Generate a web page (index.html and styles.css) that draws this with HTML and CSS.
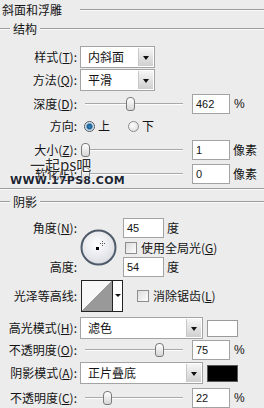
FILE: index.html
```html
<!DOCTYPE html>
<html lang="zh-CN">
<head>
    <meta charset="UTF-8">
    <meta name="viewport" content="width=device-width, initial-scale=1.0">
    <title>斜面和浮雕</title>
    <link rel="stylesheet" href="styles.css">
</head>
<body>
    <div class="panel">
        <!-- Bevel and Emboss -->
        <div class="title"><span>斜面和浮雕</span><i class="rule"></i></div>
        <div class="group-head"><i class="rule short"></i><span>结构</span><i class="rule"></i></div>

        <div class="row r-style">
            <div class="lbl">样式(<u>T</u>):</div>
            <div class="select narrow"><span>内斜面</span><b class="drop"></b></div>
        </div>
        <div class="row r-method">
            <div class="lbl">方法(<u>Q</u>):</div>
            <div class="select narrow"><span>平滑</span><b class="drop"></b></div>
        </div>
        <div class="row r-depth">
            <div class="lbl">深度(<u>D</u>):</div>
            <div class="slider"><b class="thumb" style="left: 46.2%"></b></div>
            <div class="field">462</div>
            <span class="unit pct">%</span>
        </div>
        <div class="row r-dir">
            <div class="lbl">方向:</div>
            <span class="radio on"></span><span class="opt">上</span>
            <span class="radio off"></span><span class="opt">下</span>
        </div>
        <div class="row r-size">
            <div class="lbl">大小(<u>Z</u>):</div>
            <div class="slider"><b class="thumb" style="left: 0.4%"></b></div>
            <div class="field">1</div>
            <span class="unit">像素</span>
        </div>
        <div class="row r-soft">
            <div class="lbl">软化(<u>F</u>):</div>
            <div class="slider"><b class="thumb" style="left: 0%"></b></div>
            <div class="field">0</div>
            <span class="unit">像素</span>
        </div>

        <div class="divider"></div>

        <!-- Shading -->
        <div class="group-head g-shade"><i class="rule short"></i><span>阴影</span><i class="rule"></i></div>

        <div class="angle">
            <div class="lbl a-l1">角度(<u>N</u>):</div>
            <div class="dial">
                <svg width="37" height="37" viewBox="0 0 37 37">
                    <defs>
                        <radialGradient id="dialFill" cx="45%" cy="40%" r="60%">
                            <stop offset="0" stop-color="#ffffff"/>
                            <stop offset="1" stop-color="#dcdde3"/>
                        </radialGradient>
                    </defs>
                    <circle cx="18.5" cy="18.5" r="17" fill="url(#dialFill)" stroke="#4f5b6a" stroke-width="2"/>
                    <rect x="16" y="18" width="3" height="3" fill="#000"/>
                    <path d="M22.5 12v5M20 14.5h5" stroke="#555" stroke-width="1" stroke-dasharray="1 1"/>
                </svg>
            </div>
            <div class="a-f1"><div class="field wide">45</div><span class="unit">度</span></div>
            <div class="a-c"><span class="check"></span><span class="check-text">使用全局光(<u>G</u>)</span></div>
            <div class="lbl a-l3">高度:</div>
            <div class="a-f3"><div class="field wide">54</div><span class="unit">度</span></div>
        </div>

        <div class="row r-contour">
            <div class="lbl">光泽等高线:</div>
            <div class="contour"><div class="curve"></div><b class="drop-s"></b></div>
            <span class="check c-aa"></span><span class="check-text">消除锯齿(<u>L</u>)</span>
        </div>
        <div class="row r-hl">
            <div class="lbl">高光模式(<u>H</u>):</div>
            <div class="select broad"><span>滤色</span><b class="drop"></b></div>
            <div class="swatch white"></div>
        </div>
        <div class="row r-op1">
            <div class="lbl">不透明度(<u>O</u>):</div>
            <div class="slider"><b class="thumb" style="left: 75%"></b></div>
            <div class="field">75</div>
            <span class="unit pct">%</span>
        </div>
        <div class="row r-sh">
            <div class="lbl">阴影模式(<u>A</u>):</div>
            <div class="select broad"><span>正片叠底</span><b class="drop"></b></div>
            <div class="swatch black"></div>
        </div>
        <div class="row r-op2">
            <div class="lbl">不透明度(<u>C</u>):</div>
            <div class="slider"><b class="thumb" style="left: 22%"></b></div>
            <div class="field">22</div>
            <span class="unit pct">%</span>
        </div>

        <!-- Watermark over the soften row -->
        <div class="watermark">
            <div class="wm-cn">一起ps吧</div>
            <div class="wm-url">WWW.17PS8.COM</div>
        </div>
    </div>
</body>
</html>
```

FILE: styles.css
```css
/* General */
body {
    margin: 0;
    background: #ececec;
    font-family: "Noto Sans CJK SC", "Noto Sans", sans-serif;
    font-size: 12px;
    line-height: 16px;
    color: #141414;
}

.panel {
    position: relative;
    width: 264px;
    height: 408px;
    overflow: hidden;
}

u {
    text-decoration: underline;
    text-underline-offset: 1px;
}

/* Headings and rules */
.title {
    display: flex;
    align-items: center;
    height: 20px;
    padding-left: 2px;
}

.rule {
    flex: 1;
    height: 0;
    border-top: 1px solid #9c9c9c;
    border-bottom: 1px solid #fafafa;
}

.title .rule {
    margin-left: 18px;
}

.group-head {
    display: flex;
    align-items: center;
    height: 18px;
}

.group-head span {
    margin: 0 3px;
}

.rule.short {
    flex: none;
    width: 10px;
}

.divider {
    margin-top: 4px;
    border-top: 1px solid #9c9c9c;
    border-bottom: 1px solid #fafafa;
}

.g-shade {
    margin-top: 3px;
}

/* Rows */
.row {
    display: flex;
    align-items: center;
}

.lbl {
    width: 77px;
    flex: none;
    text-align: right;
    white-space: nowrap;
}

.r-style { margin-top: 8px; height: 22px; }
.r-method { margin-top: 1px; height: 22px; }
.r-depth { margin-top: 3px; height: 20px; }
.r-dir { margin-top: 3px; height: 18px; }
.r-size { margin-top: 5px; height: 20px; }
.r-soft { margin-top: 4px; height: 20px; }
.r-contour { margin-top: 3px; height: 32px; }
.r-hl { margin-top: 5px; height: 22px; }
.r-op1 { margin-top: 1px; height: 20px; }
.r-sh { margin-top: 2px; height: 22px; }
.r-op2 { margin-top: 4px; height: 20px; }

/* Select boxes */
.select {
    display: flex;
    align-items: center;
    height: 22px;
    margin-left: 3px;
    box-sizing: border-box;
    border: 1px solid #a4a4a4;
    background: #fff;
    padding-left: 7px;
}

.select.narrow { width: 75px; }
.select.broad { width: 123px; }

.drop {
    position: relative;
    margin-left: auto;
    width: 14px;
    height: 18px;
    margin-right: 1px;
    border-left: 1px solid #c8c8c8;
    background: linear-gradient(#f6f6f6, #cfcfcf);
}

.drop::after {
    content: "";
    position: absolute;
    left: 4px;
    top: 8px;
    border-left: 3px solid transparent;
    border-right: 3px solid transparent;
    border-top: 4px solid #111;
}

/* Sliders */
.slider {
    position: relative;
    width: 98px;
    height: 14px;
    margin-left: 8px;
    flex: none;
}

.slider::before {
    content: "";
    position: absolute;
    left: 0;
    right: 0;
    top: 6px;
    border-top: 1px solid #a9a9a9;
    border-bottom: 1px solid #fdfdfd;
}

.thumb {
    position: absolute;
    top: 0;
    width: 7px;
    height: 12px;
    margin-left: -4px;
    border: 1px solid #7a7a7a;
    border-radius: 4px 4px 3px 3px;
    background: linear-gradient(#ffffff, #d6d6d6);
}

/* Number fields */
.field {
    width: 38px;
    height: 20px;
    box-sizing: border-box;
    margin-left: 9px;
    padding-left: 3px;
    border: 1px solid #a3a3a3;
    background: #fff;
    font-family: "Liberation Sans", Arial, sans-serif;
    font-size: 11px;
    line-height: 18px;
}

.field.wide {
    width: 41px;
    margin-left: 0;
}

.unit {
    margin-left: 3px;
}

.unit.pct {
    font-family: "Liberation Sans", Arial, sans-serif;
    margin-left: 4px;
}

/* Radio buttons */
.radio {
    width: 9px;
    height: 9px;
    border: 1px solid #8c8c8c;
    border-radius: 50%;
    background: radial-gradient(circle at 40% 35%, #fff, #d8d8d8);
    flex: none;
}

.radio.on {
    margin-left: 7px;
    border-color: #4c5a68;
    background: radial-gradient(circle, #2e84c4 0, #1b5d91 2.5px, #c9d6e2 3.5px, #eef2f6 5px);
}

.radio.off {
    margin-left: 18px;
}

.opt {
    margin-left: 3px;
}

/* Checkboxes */
.check {
    width: 10px;
    height: 10px;
    border: 1px solid #8d8d8d;
    background: linear-gradient(135deg, #dcdcdc, #fdfdfd);
    flex: none;
}

.check-text {
    margin-left: 4px;
    white-space: nowrap;
}

/* Angle block */
.angle {
    display: grid;
    grid-template-columns: 77px 46px auto;
    grid-template-rows: 20px 19px 20px;
    margin-top: 7px;
}

.a-l1, .a-l3 {
    align-self: center;
}

.a-l1 { grid-column: 1; grid-row: 1; }
.a-l3 { grid-column: 1; grid-row: 3; }

.dial {
    grid-column: 2;
    grid-row: 1 / 4;
    align-self: center;
    margin-left: 3px;
    height: 37px;
}

.a-f1, .a-f3, .a-c {
    grid-column: 3;
    display: flex;
    align-items: center;
}

.a-f1 { grid-row: 1; }
.a-c { grid-row: 2; padding-left: 2px; }
.a-f3 { grid-row: 3; }

/* Contour picker */
.contour {
    display: flex;
    width: 42px;
    height: 32px;
    box-sizing: border-box;
    margin-left: 4px;
    border: 1px solid #222;
    background: #fff;
}

.curve {
    width: 30px;
    border-right: 1px solid #222;
    background: linear-gradient(to bottom right, #f7f7f7 50%, #999 50%);
}

.drop-s {
    position: relative;
    flex: 1;
}

.drop-s::after {
    content: "";
    position: absolute;
    left: 2px;
    top: 13px;
    border-left: 3px solid transparent;
    border-right: 3px solid transparent;
    border-top: 3px solid #111;
}

.c-aa {
    margin-left: 14px;
}

/* Colour swatches */
.swatch {
    width: 31px;
    height: 17px;
    box-sizing: border-box;
    margin-left: 4px;
    border: 1px solid #9a9a9a;
}

.swatch.white { background: #fff; }
.swatch.black { background: #000; border-color: #5a5a5a; }

/* Watermark */
.watermark {
    position: absolute;
    left: 10px;
    top: 156px;
    pointer-events: none;
}

.wm-cn {
    margin-left: 20px;
    font-size: 15px;
    line-height: 18px;
    color: #2a2a2a;
    text-shadow: 0 0 2px #fff, 0 0 2px #fff;
}

.wm-url {
    font-family: "DejaVu Sans", sans-serif;
    font-weight: bold;
    font-size: 11px;
    line-height: 13px;
    letter-spacing: 0.3px;
    color: #1d2633;
    text-shadow: 0 0 2px #fff, 0 0 1px #fff;
}
```
